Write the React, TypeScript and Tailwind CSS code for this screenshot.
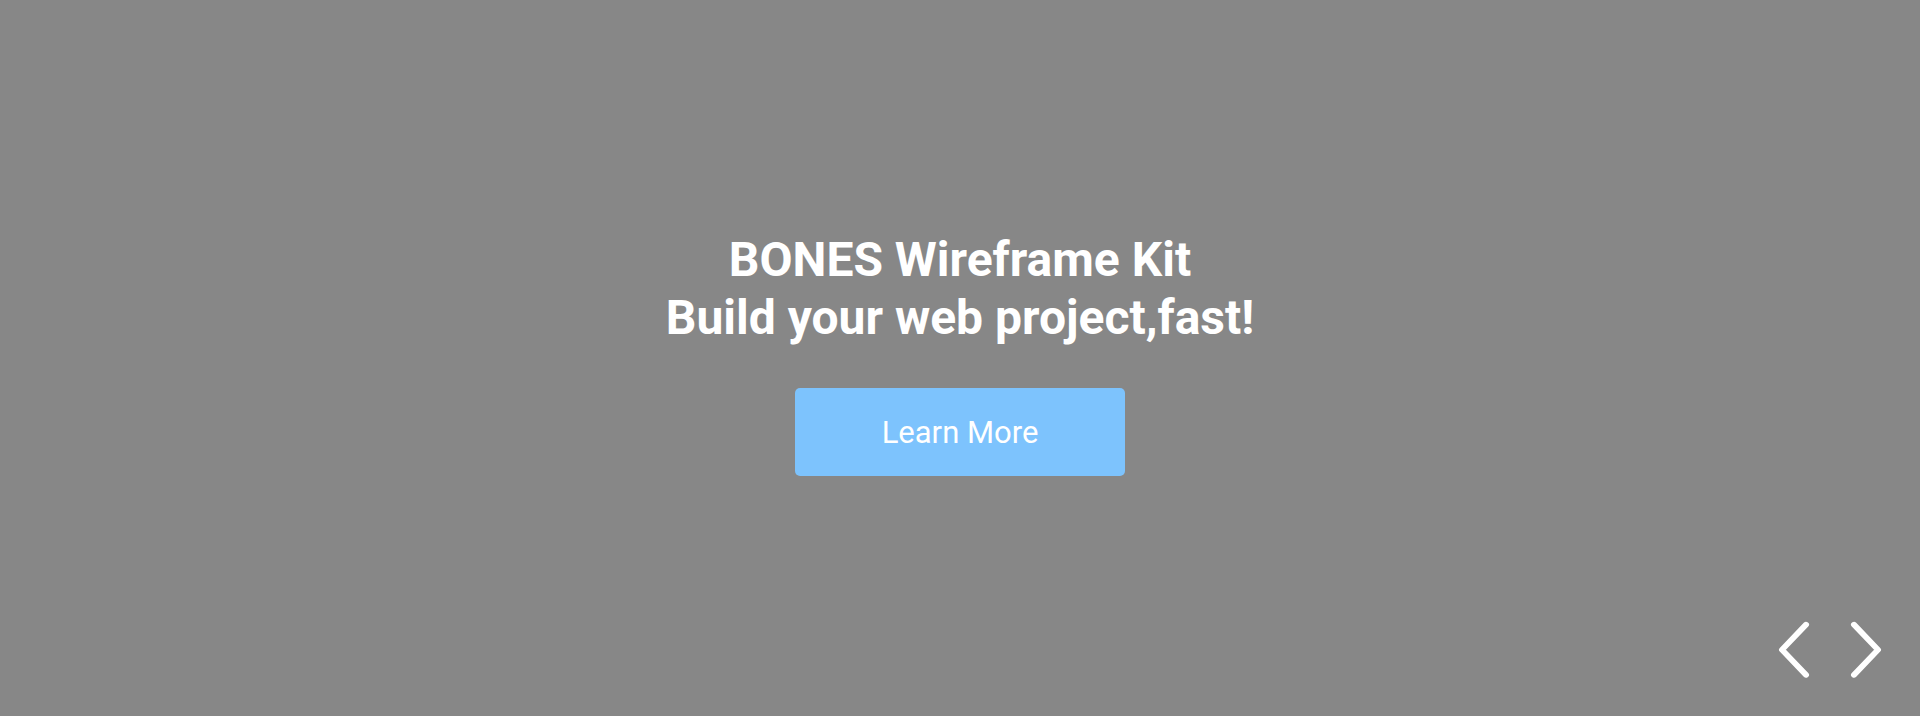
export default function App() {
  return (
    <div
      className="relative w-full h-[716px] bg-[#878787] flex flex-col items-center justify-center overflow-hidden"
      style={{ fontFamily: 'Roboto, "Liberation Sans", sans-serif' }}
    >
      <div className="flex flex-col items-center -mt-[9px]">
        <h1 className="text-white font-bold text-[48px] leading-[57.6px] text-center m-0">
          BONES Wireframe Kit
          <br />
          Build your web project,fast!
        </h1>
        <button className="mt-[41px] w-[330px] h-[88px] pt-[4px] rounded-[5px] bg-[#7dc3fd] text-white text-[31px] font-normal flex items-center justify-center">
          Learn More
        </button>
      </div>
      <div className="absolute right-[38px] bottom-[36px] flex items-center gap-[36px]">
        <svg width="34" height="60" viewBox="0 0 34 60" fill="none">
          <path d="M30 3 L6 30 L30 57" stroke="white" strokeWidth="6" strokeLinecap="round" strokeLinejoin="round" transform="translate(-2 0) scale(1 0.93) translate(0 2)" />
        </svg>
        <svg width="34" height="60" viewBox="0 0 34 60" fill="none">
          <path d="M4 3 L28 30 L4 57" stroke="white" strokeWidth="6" strokeLinecap="round" strokeLinejoin="round" transform="translate(2 0) scale(1 0.93) translate(0 2)" />
        </svg>
      </div>
    </div>
  );
}
